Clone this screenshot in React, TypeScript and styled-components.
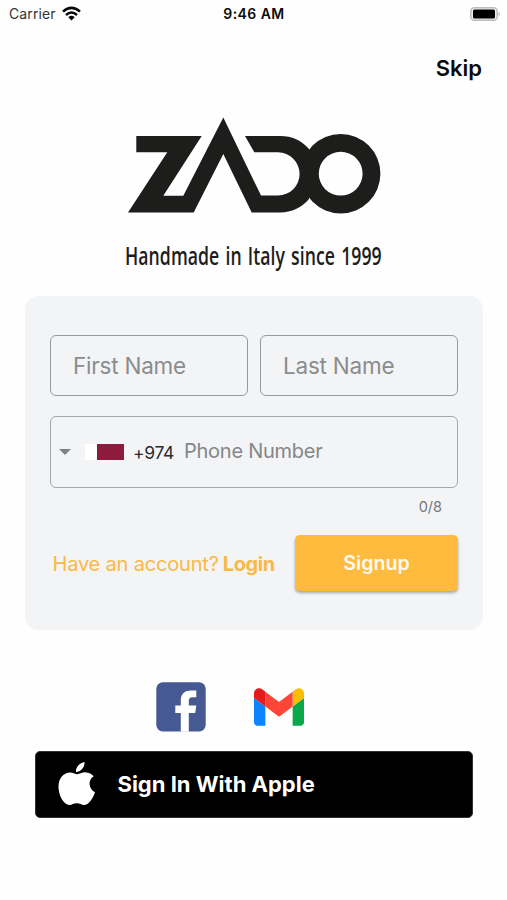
import React from "react";
import styled, { createGlobalStyle } from "styled-components";

const GlobalStyle = createGlobalStyle`
  * { box-sizing: border-box; }
  body { margin: 0; background: #fefefe; }
  button, input { font-family: inherit; }
`;

const Screen = styled.main`
  display: flex;
  flex-direction: column;
  align-items: center;
  width: 507px;
  height: 900px;
  overflow: hidden;
  background: #fefefe;
  color: #0b0b0b;
  font-family: Inter, "Liberation Sans", sans-serif;
`;

const StatusBar = styled.header`
  display: grid;
  grid-template-columns: 1fr auto 1fr;
  align-items: center;
  width: 100%;
  height: 27px;
  padding: 0 6px 0 9px;
  font-size: 14px;
`;

const Carrier = styled.div`
  display: flex;
  align-items: center;
  gap: 6px;
  color: #333;
  letter-spacing: 0.1px;
`;

const Clock = styled.time`
  margin-left: -2px;
  font-weight: 600;
  letter-spacing: 0.45px;
`;

const BatteryIcon = styled.svg`
  justify-self: end;
`;

const TopActions = styled.nav`
  display: flex;
  justify-content: flex-end;
  width: 100%;
  height: 85px;
  padding: 26px 25px 0 0;
`;

const SkipButton = styled.button`
  height: 30px;
  padding: 0;
  border: 0;
  background: none;
  color: #0b0b0b;
  font-size: 22px;
  line-height: 30px;
  font-weight: 600;
`;

const Brand = styled.svg`
  display: block;
  flex: none;
  font-family: "Open Sans", "Liberation Sans", sans-serif;
  font-size: 24.5px;
  font-weight: 600;
  word-spacing: 2px;
`;

const Card = styled.form`
  display: flex;
  flex-direction: column;
  width: 458px;
  height: 334px;
  margin: 16px 0 0 1px;
  padding: 39px 25px 0;
  border-radius: 14px;
  background: #f3f4f6;
`;

const NameRow = styled.div`
  display: grid;
  grid-template-columns: 198px 198px;
  justify-content: space-between;
  margin-bottom: 20px;
`;

const NameInput = styled.input`
  width: 100%;
  height: 61px;
  padding: 0 22px;
  border: 1.5px solid #98999b;
  border-radius: 6px;
  background: none;
  font-size: 22.5px;
  letter-spacing: -0.22px;
  outline: none;
  &::placeholder { color: #8b8c8e; opacity: 1; }
`;

const PhoneField = styled.div`
  display: flex;
  align-items: center;
  height: 72px;
  padding: 0 8px;
  border: 1.5px solid #a5a6a8;
  border-radius: 6px;
`;

const Flag = styled.span`
  display: block;
  width: 39px;
  height: 16px;
  margin: 0 9px 0 14px;
  background: linear-gradient(90deg, #fff 0 12px, #8d1b3d 12px);
`;

const DialCode = styled.span`
  width: 51px;
  color: #2b2b2d;
  font-size: 17.5px;
  letter-spacing: -0.3px;
`;

const PhoneInput = styled.input`
  flex: 1;
  min-width: 0;
  padding: 0 0 2px;
  border: 0;
  background: none;
  font-size: 20px;
  letter-spacing: -0.25px;
  outline: none;
  &::placeholder { color: #858688; opacity: 1; }
`;

const Counter = styled.span`
  align-self: flex-end;
  height: 20px;
  margin: 9px 16px 18px 0;
  color: #77787a;
  font-size: 14.5px;
  line-height: 20px;
`;

const Actions = styled.div`
  display: flex;
  align-items: center;
  justify-content: space-between;
  padding-left: 2.5px;
`;

const LoginPrompt = styled.p`
  display: flex;
  gap: 4px;
  margin: 2px 0 0;
  color: #fab847;
  font-size: 20px;
  line-height: 28px;
  letter-spacing: -0.18px;
  white-space: nowrap;
`;

const LoginLink = styled.strong`
  font-weight: 700;
  letter-spacing: -0.4px;
`;

const SignupButton = styled.button`
  width: 163px;
  height: 56px;
  padding: 0;
  border: 0;
  border-radius: 5px;
  background: #ffbb3e;
  box-shadow: 0 2px 3px rgba(0, 0, 0, 0.32);
  color: #fffaf0;
  font-size: 19.6px;
  font-weight: 600;
`;

const SocialRow = styled.div`
  display: flex;
  align-items: center;
  gap: 48px;
  height: 50px;
  margin: 52px 0 19px;
  padding-right: 48px;
`;

const AppleButton = styled.button`
  display: flex;
  align-items: center;
  gap: 23px;
  width: 438px;
  height: 67px;
  padding: 0 0 2px 22px;
  border: 1px solid #333;
  border-radius: 5px;
  background: #000;
  color: #fff;
  font-size: 22px;
  font-weight: 700;
`;

const SocialIcon = styled.svg`
  display: block;
`;

function ZadoBrand() {
  return (
    <Brand width="260" height="168" viewBox="124 112 260 168" role="img" aria-label="Zado">
      <g fill="#1d1d1b">
        <path d="M136.3 136H201.7L163.3 195.7H183.3L223.3 117.5L261 195.5H278A21.6 21.6 0 0 0 278 152.3H254.3L245 136H280A38.2 38.2 0 0 1 309 149V199A38.2 38.2 0 0 1 280 212.4H251.7L223.3 154L193.7 212.4H128L167.3 152.3H136.3Z" />
        <path fillRule="evenodd" d="M340.7 134A39.7 39.7 0 1 1 340.7 213.4A39.7 39.7 0 1 1 340.7 134ZM340.7 151.8A21.9 21.9 0 1 0 340.7 195.6A21.9 21.9 0 1 0 340.7 151.8Z" />
        <text transform="translate(125 264.5) scale(0.72 1)" textLength="356.5">
          Handmade in Italy since 1999
        </text>
      </g>
    </Brand>
  );
}

export default function App() {
  return (
    <>
      <GlobalStyle />
      <Screen>
        <StatusBar>
          <Carrier>
            Carrier
            <svg width="19" height="15" viewBox="0 0 19 15">
              <g fill="none" stroke="#080808" strokeWidth="2.5">
                <path d="M1 5.6Q9.5 -1.9 18 5.6" />
                <path d="M4 9Q9.5 4.1 15 9" />
              </g>
              <path d="M6.3 11.2Q9.5 8.5 12.7 11.2L9.5 14.5Z" fill="#080808" />
            </svg>
          </Carrier>
          <Clock>9:46 AM</Clock>
          <BatteryIcon width="31" height="14" viewBox="0 0 31 14">
            <rect x="0.8" y="0.8" width="26.4" height="12.4" rx="3.5" fill="#eee" stroke="#bdbdbd" strokeWidth="1.5" />
            <rect x="3" y="2.5" width="22" height="9" rx="1.5" fill="#000" />
            <path d="M28.7 4.8Q31 7 28.7 9.2Z" fill="#aaa" />
          </BatteryIcon>
        </StatusBar>
        <TopActions>
          <SkipButton>Skip</SkipButton>
        </TopActions>
        <ZadoBrand />
        <Card onSubmit={(event) => event.preventDefault()}>
          <NameRow>
            <NameInput placeholder="First Name" />
            <NameInput placeholder="Last Name" />
          </NameRow>
          <PhoneField>
            <svg width="12" height="6" viewBox="0 0 12 6">
              <path d="M0 0H12L6 6Z" fill="#808183" />
            </svg>
            <Flag />
            <DialCode>+974</DialCode>
            <PhoneInput placeholder="Phone Number" />
          </PhoneField>
          <Counter>0/8</Counter>
          <Actions>
            <LoginPrompt>
              <span>Have an account?</span>
              <LoginLink>Login</LoginLink>
            </LoginPrompt>
            <SignupButton type="submit">Signup</SignupButton>
          </Actions>
        </Card>
        <SocialRow>
          <SocialIcon width="50" height="50" viewBox="0 0 50 50" aria-label="Facebook">
            <rect x="0.3" y="0.3" width="49.4" height="49.2" rx="6.5" fill="#475993" />
            <path d="M24.8 49.7V31H19.3V23.4H24.8V18.5C24.8 11.5 29 8.5 35 8.5H40.3V15.3H36.6C33.6 15.3 32.8 16.8 32.8 19.3V23.4H40.3L39.2 31H32.8V49.7Z" fill="#fff" />
          </SocialIcon>
          <SocialIcon width="50" height="38" viewBox="52 42 88 66" aria-label="Gmail">
            <path fill="#0a84ff" d="M58 108h14V74L52 59v43c0 3.3 2.7 6 6 6" />
            <path fill="#0ba84a" d="M120 108h14c3.3 0 6-2.7 6-6V59l-20 15" />
            <path fill="#fbbc04" d="M120 48v26l20-15v-8c0-7.4-8.5-11.6-14.4-7.2" />
            <path fill="#ff4537" d="M72 74V48l24 18 24-18v26L96 92" />
            <path fill="#e51b1b" d="M52 51v8l20 15V48l-5.6-4.2C60.5 39.4 52 43.6 52 51" />
          </SocialIcon>
        </SocialRow>
        <AppleButton>
          <SocialIcon width="37" height="44" viewBox="0 0 37 44">
            <path fill="#fff" d="M26.5 0C27 5.5 22.5 10 18 10C17.5 5 21.8 1 26.5 0ZM35.7 14.2C29.8 17.8 30.3 26.7 37 30.2C35 36.2 31 42.5 26.7 43C23.6 43.3 22.3 41.3 18.8 41.3C15.3 41.3 13.7 43.3 11 43C5.2 42.3.5 32.8.5 25C.5 17 4.8 11.2 11.3 10.6C14.7 10.3 16.8 12.3 19.2 12.3C21.6 12.3 24.4 10.1 28 10.4C31 10.6 33.8 11.7 35.7 14.2Z" />
          </SocialIcon>
          Sign In With Apple
        </AppleButton>
      </Screen>
    </>
  );
}
